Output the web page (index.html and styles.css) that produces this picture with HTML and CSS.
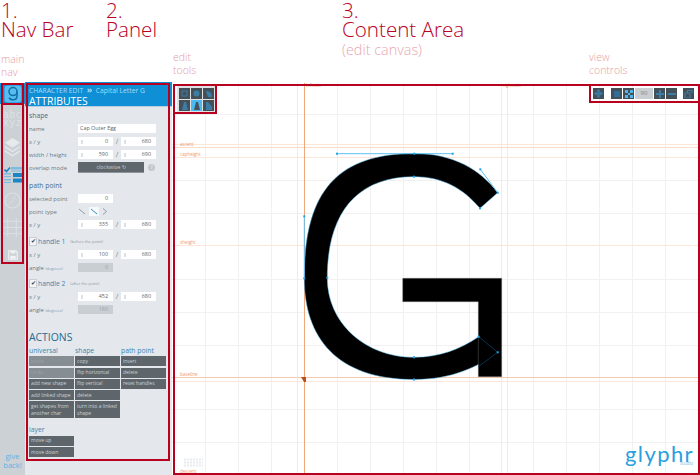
FILE: index.html
```html
<!DOCTYPE html>
<html lang="en">

<head>
    <meta charset="UTF-8" />
    <title>Glyphr Studio - Edit Canvas</title>
    <link rel="stylesheet" href="styles.css">
</head>

<body>
    <div class="titles">
        <div class="title-col">
            <div class="big">1.<br>Nav Bar</div>
            <div class="note note-main">main<br>nav</div>
        </div>
        <div class="big">2.<br>Panel</div>
        <div class="note note-tools">edit<br>tools</div>
        <div class="title-col">
            <div class="big">3.<br>Content Area</div>
            <div class="sub">(edit canvas)</div>
        </div>
        <div class="note note-tools">view<br>controls</div>
    </div>

    <div class="app">
        <div class="nav">
            <div class="nav-logo">
                <svg width="18" height="18" viewBox="0 0 18 18">
                    <rect x="0.5" y="0.5" width="17" height="17" rx="3" fill="#59bdf0" />
                    <circle cx="9" cy="6.6" r="4" fill="none" stroke="#0f6ea6" stroke-width="1.5" />
                    <path d="M13 6.6V11C13 13.4 11.2 14.8 9 14.8C7.2 14.8 5.8 14 5.2 12.6" fill="none" stroke="#0f6ea6" stroke-width="1.5" />
                </svg>
            </div>
            <div class="nav-abc">abc<br>xyz</div>
            <svg class="nav-icon nav-layers" width="15" height="19" viewBox="0 0 18 20" preserveAspectRatio="none">
                <path d="M9 0L18 5L9 10L0 5Z" fill="#e6eaed" />
                <path d="M0 8.500L9 13.500L18 8.500V10L9 15L0 10Z" fill="#e6eaed" />
                <path d="M0 13L9 18L18 13V14.500L9 19.500L0 14.500Z" fill="#e6eaed" />
            </svg>
            <svg class="nav-icon nav-attr" width="18" height="16" viewBox="0 0 18 16">
                <path d="M0.500 2.500L2.500 4.500L6 0.500" fill="none" stroke="#1a86c4" stroke-width="1.600" />
                <rect x="7" y="0" width="11" height="2.500" fill="#7dbbe0" />
                <rect x="7" y="3.500" width="11" height="1" fill="#7dbbe0" />
                <rect x="0" y="6" width="7" height="1.500" fill="#7dbbe0" />
                <rect x="9" y="6" width="9" height="4" fill="#1a86c4" />
                <rect x="0" y="9" width="7" height="1" fill="#7dbbe0" />
                <rect x="0" y="12" width="7" height="1.500" fill="#7dbbe0" />
                <rect x="9" y="11.500" width="9" height="4" fill="#1a86c4" />
                <rect x="0" y="15" width="7" height="1" fill="#7dbbe0" />
            </svg>
            <svg class="nav-icon nav-clock" width="17" height="17" viewBox="0 0 18 18">
                <circle cx="9" cy="9" r="8" fill="none" stroke="#dbe0e3" stroke-width="1.200" />
                <path d="M9.500 9L12 4M9.500 9L6 13" fill="none" stroke="#dbe0e3" stroke-width="0.800" />
            </svg>
            <svg class="nav-icon nav-grid" width="19" height="19" viewBox="0 0 20 18" preserveAspectRatio="none">
                <path d="M0 3H20M0 9H20M0 15H20M5 0V18M14 0V18" fill="none" stroke="#dbe0e3" stroke-width="1" />
            </svg>
            <svg class="nav-icon nav-save" width="10" height="10" viewBox="0 0 13 13">
                <path d="M1 1H10.500L12 2.500V12H1Z" fill="none" stroke="#f0f2f4" stroke-width="1.500" />
                <rect x="3.500" y="1" width="6" height="3.500" fill="#f0f2f4" />
                <rect x="3" y="7.500" width="7" height="4" fill="#f0f2f4" />
            </svg>
            <div class="give-back">give<br>back!</div>
        </div>

        <div class="panel">
            <div class="panel-head">
                <div class="crumb">CHARACTER EDIT &nbsp;<b>&raquo;</b>&nbsp; Capital Letter G</div>
                <div class="panel-title">ATTRIBUTES</div>
            </div>
            <div class="panel-body">
                <h3>shape</h3>
                <div class="row"><span class="lbl">name</span><span class="field field-wide">Cap Outer Egg</span></div>
                <div class="row"><span class="lbl">x / y</span><span class="field num lock">0</span><i>/</i><span class="field num lock">680</span></div>
                <div class="row"><span class="lbl">width / height</span><span class="field num lock">590</span><i>/</i><span class="field num lock">690</span></div>
                <div class="row"><span class="lbl">overlap mode</span><span class="overlap">clockwise &#8635;</span><span class="help">?</span></div>

                <h3 class="sec">path point</h3>
                <div class="row"><span class="lbl">selected point</span><span class="field num">0</span></div>
                <div class="row">
                    <span class="lbl">point type</span>
                    <svg class="ptype" width="36" height="9" viewBox="0 0 36 9">
                        <path d="M1 2L7 7" stroke="#7b8890" stroke-width="0.800" />
                        <rect x="11" y="0" width="10" height="9" fill="#f7f9fb" />
                        <path d="M13 2L19 7" stroke="#2b8fd0" stroke-width="1" />
                        <path d="M25 1.500L28.500 4.500L25 7.500" fill="none" stroke="#7b8890" stroke-width="0.800" />
                    </svg>
                </div>
                <div class="row"><span class="lbl">x / y</span><span class="field num lock">335</span><i>/</i><span class="field num lock">680</span></div>

                <h3 class="sec-handle"><span class="check">&#10004;</span>handle 1 <small>(before the point)</small></h3>
                <div class="row"><span class="lbl">x / y</span><span class="field num lock">100</span><i>/</i><span class="field num lock">680</span></div>
                <div class="row"><span class="lbl">angle <small>(degrees)</small></span><span class="field num off">0</span></div>

                <h3 class="sec-handle gap"><span class="check">&#10004;</span>handle 2 <small>(after the point)</small></h3>
                <div class="row"><span class="lbl">x / y</span><span class="field num lock">452</span><i>/</i><span class="field num lock">680</span></div>
                <div class="row"><span class="lbl">angle <small>(degrees)</small></span><span class="field num off">180</span></div>

                <h2>ACTIONS</h2>
                <div class="actions">
                    <div class="act-col">
                        <h4>universal</h4>
                        <button class="off">paste</button>
                        <button class="off">undo</button>
                        <button>add new shape</button>
                        <button>add linked shape</button>
                        <button class="tall">get shapes from another char</button>
                    </div>
                    <div class="act-col">
                        <h4>shape</h4>
                        <button>copy</button>
                        <button>flip horizontal</button>
                        <button>flip vertical</button>
                        <button>delete</button>
                        <button class="tall">turn into a linked shape</button>
                    </div>
                    <div class="act-col">
                        <h4>path point</h4>
                        <button>insert</button>
                        <button>delete</button>
                        <button>reset handles</button>
                    </div>
                </div>
                <div class="act-col layer">
                    <h4>layer</h4>
                    <button>move up</button>
                    <button>move down</button>
                </div>
            </div>
        </div>

        <div class="canvas">
            <svg class="stage" width="528" height="392" viewBox="172 83 528 392">
                <!-- grid -->
                <path d="M205.500 83V475M238.500 83V475M271.500 83V475M337.500 83V475M370.500 83V475M403.500 83V475M436.500 83V475M469.500 83V475M533.500 83V475M566.500 83V475M599.500 83V475M632.500 83V475M665.500 83V475" stroke="#f1f1f1" stroke-width="1" />
                <path d="M172 114.500H700M172 180.500H700M172 213.500H700M172 279.500H700M172 312.500H700M172 345.500H700M172 409.500H700M172 442.500H700" stroke="#f1f1f1" stroke-width="1" />
                <!-- guides -->
                <path d="M297.500 83V475M501.500 83V475M507.500 83V475M172 144.500H700M172 157.500H700M172 245.500H700M172 381.500H700" stroke="#fde6da" stroke-width="1" />
                <path d="M172 147.500H700" stroke="#fbdccb" stroke-width="1" />
                <path d="M304.500 83V475" stroke="#efa77c" stroke-width="1" />
                <path d="M172 377.500H700" stroke="#f7c9ad" stroke-width="1" />
                <path d="M301 377H306V382L304 382Z" fill="#b9501a" />
                <text class="guide-label" x="306" y="87">leftside</text>
                <text class="guide-label" x="503" y="87">rightside</text>
                <text class="guide-label" x="180" y="146">ascent</text>
                <text class="guide-label" x="180" y="156">capheight</text>
                <text class="guide-label" x="180" y="244">xheight</text>
                <text class="guide-label" x="180" y="376">baseline</text>
                <text class="guide-label" x="180" y="473">descent</text>
                <!-- the G -->
                <path class="egg" d="M497.700 192.700C480.300 169.300 452.700 153.500 414.300 153.500C330 153.500 304.300 200 304.300 278.300C304.300 337 336 379.500 414.300 379.500C452 379.500 478.300 366.700 497.700 352.300L478.700 336.700C460 349 440 357.300 414.300 357.300C364 357.300 327.300 322 327.300 278C327.300 215 355 176.700 414.300 176.700C442 176.700 463 188 480 208.300Z" />
                <path class="bar" d="M402.700 278.300H501.700V376.700H478.300V301.700H402.700Z" />
                <!-- handles -->
                <path d="M337 153.700H452.700M304.300 216.300V278.300M480.300 169.300L497.700 192.700" stroke="#5fc0f2" stroke-width="1" fill="none" />
                <path d="M478.700 336.700L497.700 352.300L478.300 366.700" stroke="#0a3550" stroke-width="1" fill="none" />
                <g fill="#1fa3ea">
                    <rect x="336" y="152.700" width="2" height="2" />
                    <rect x="451.700" y="152.700" width="2" height="2" />
                    <rect x="303.300" y="215.300" width="2" height="2" />
                    <rect x="479.300" y="168.300" width="2" height="2" />
                    <rect x="413.300" y="152.700" width="2" height="2" />
                    <rect x="413" y="175.700" width="2" height="2" />
                    <rect x="496.700" y="191.700" width="2" height="2" />
                    <rect x="479" y="207.300" width="2" height="2" />
                    <rect x="303.300" y="277.300" width="2" height="2" />
                    <rect x="326.300" y="276.700" width="2" height="2" />
                    <rect x="413" y="356.300" width="2" height="2" />
                    <rect x="413" y="378.500" width="2" height="2" />
                    <rect x="477.700" y="335.700" width="2" height="2" />
                    <rect x="496.700" y="351.300" width="2" height="2" />
                </g>
                <!-- keyboard hint -->
                <path d="M184 459.500H203M184 462.500H203M184 465.500H203" stroke="#e8ebee" stroke-width="2" stroke-dasharray="2 1" />
            </svg>

            <div class="edit-tools">
                <span class="tool"><svg width="8" height="8" viewBox="0 0 8 8"><rect x="1" y="1" width="5" height="5" fill="none" stroke="#3a7ea8" /></svg></span>
                <span class="tool"><svg width="8" height="8" viewBox="0 0 8 8"><circle cx="3.500" cy="3.500" r="3" fill="#3a7ea8" /></svg></span>
                <span class="tool"><svg width="8" height="8" viewBox="0 0 8 8"><path d="M1 1C5 1 7 3 7 7L3 7Z" fill="#3a7ea8" /></svg></span>
                <span class="tool"><svg width="8" height="8" viewBox="0 0 8 8"><path d="M3 0H5L7 8H1Z" fill="#3a7ea8" /></svg></span>
                <span class="tool on"><svg width="8" height="8" viewBox="0 0 8 8"><path d="M3 0H5L7 8H1Z" fill="#46525a" /></svg></span>
                <span class="tool"><svg width="8" height="8" viewBox="0 0 8 8"><path d="M1 0H3L7 5V8H1Z" fill="#3a7ea8" /></svg></span>
            </div>

            <div class="view-tools">
                <span class="tool"><svg width="9" height="9" viewBox="0 0 9 9"><path d="M4.500 0L6.500 2.500H5.300V3.700H6.500V2.500L9 4.500L6.500 6.500V5.300H5.300V6.500H6.500L4.500 9L2.500 6.500H3.700V5.300H2.500V6.500L0 4.500L2.500 2.500V3.700H3.700V2.500H2.500Z" fill="#3a7ea8" /></svg></span>
                <span class="tool gap-wide"><svg width="8" height="8" viewBox="0 0 8 8"><path d="M1 1H7V7H1Z" fill="#2f6f99" /></svg></span>
                <span class="tool"><svg width="8" height="8" viewBox="0 0 8 8"><path d="M0 0H3V3H0ZM5 0H8V3H5ZM0 5H3V8H0ZM5 5H8V8H5ZM3 3H5V5H3Z" fill="#52b6ec" /></svg></span>
                <span class="zoom-val">90</span>
                <span class="tool"><svg width="8" height="8" viewBox="0 0 8 8"><path d="M3 0H5V3H8V5H5V8H3V5H0V3H3Z" fill="#3a7ea8" /></svg></span>
                <span class="tool"><svg width="8" height="8" viewBox="0 0 8 8"><rect x="0" y="3" width="8" height="2" fill="#3a7ea8" /></svg></span>
                <span class="tool gap-left"><svg width="9" height="9" viewBox="0 0 9 9"><path d="M1 4H6V9H1ZM3.500 4V1.500H8V4" fill="none" stroke="#3a7ea8" stroke-width="1.200" /></svg></span>
            </div>

            <div class="logo">
                <span class="logo-name">glyphr</span>
                <span class="logo-sub">studio</span>
            </div>
        </div>

        <!-- red callouts drawn over the screen -->
        <div class="mark mark-nav"></div>
        <div class="mark mark-nav-logo"></div>
        <div class="mark mark-panel"></div>
        <div class="mark mark-canvas"></div>
        <div class="mark mark-tools"></div>
        <div class="mark mark-view"></div>
    </div>
</body>

</html>
```

FILE: styles.css
```css
html, body {
    margin: 0;
    padding: 0;
}

body {
    width: 700px;
    height: 475px;
    overflow: hidden;
    background-color: #ffffff;
    font-family: "Open Sans", sans-serif;
}

/* titles above the screenshot */
.titles {
    height: 83px;
    display: grid;
    grid-template-columns: 105px 67px 169px 247px 1fr;
    padding-left: 1px;
    box-sizing: border-box;
}

.big {
    font-size: 20.6px;
    font-weight: 300;
    line-height: 19px;
    padding-top: 1px;
    color: #b8001f;
}

.note {
    font-size: 10.5px;
    font-weight: 300;
    line-height: 13px;
    color: #e69aa6;
}

.note-main {
    margin-top: 14px;
}

.note-tools {
    padding-top: 51px;
}

.sub {
    font-size: 14.4px;
    font-weight: 300;
    color: #e9a6b0;
    line-height: 16px;
    margin-top: 3px;
}

/* app */
.app {
    height: 392px;
    display: flex;
    position: relative;
}

.nav {
    width: 25px;
    background-color: #cbd1d5;
    display: flex;
    flex-direction: column;
    align-items: center;
}

.nav-logo {
    height: 21px;
    width: 25px;
    background-color: #0e8fd6;
    display: flex;
    justify-content: center;
    align-items: center;
}

.nav-logo svg {
    display: block;
}

.nav-abc {
    margin-top: 8px;
    height: 16px;
    font-family: "Liberation Mono", monospace;
    font-size: 10px;
    line-height: 8px;
    letter-spacing: 0.5px;
    color: #dde1e4;
    text-align: center;
}

.nav-icon {
    display: block;
    flex: none;
}

.nav-layers {
    margin-top: 10px;
}

.nav-attr {
    margin-top: 10px;
}

.nav-clock {
    margin-top: 9px;
}

.nav-grid {
    margin-top: 9px;
}

.nav-save {
    margin-top: 13px;
}

.give-back {
    margin-top: auto;
    margin-bottom: 5px;
    font-size: 7.6px;
    line-height: 9px;
    color: #5fb2e4;
    text-align: center;
}

.panel {
    width: 147px;
    margin-top: -1px;
    background-color: #e4e8ed;
}

.panel-head {
    height: 24px;
    background-color: #0e8fd6;
    padding-left: 4px;
    border-bottom: 1px solid #b9cfe0;
}

.crumb {
    font-size: 6.8px;
    line-height: 9px;
    padding-top: 3px;
    color: #a5dcf8;
    white-space: nowrap;
}

.crumb b {
    font-size: 9px;
    line-height: 9px;
}

.panel-title {
    font-size: 10.4px;
    line-height: 12px;
    color: #ffffff;
}

.panel-body {
    padding-left: 4px;
    padding-top: 3px;
}

h3 {
    margin: 0;
    height: 12px;
    font-size: 6.8px;
    font-weight: 400;
    line-height: 12px;
    color: #436f8a;
}

.sec {
    margin-top: 6px;
}

.sec-handle {
    margin-top: 4px;
    height: 13px;
    line-height: 13px;
    display: flex;
    align-items: center;
    color: #3f83ad;
    white-space: pre;
}

.sec-handle.gap {
    margin-top: 3px;
}

.sec-handle small {
    font-size: 4px;
    color: #8a949b;
    margin-left: 3px;
}

.check {
    width: 6px;
    height: 7px;
    margin-right: 1px;
    background-color: #f2f4f6;
    border: 1px solid #c8ced3;
    font-size: 6px;
    line-height: 7px;
    color: #30383d;
    text-align: center;
}

.row {
    height: 13px;
    display: flex;
    align-items: center;
}

.lbl {
    width: 49px;
    flex: none;
    font-size: 5.9px;
    color: #6d7a83;
    white-space: nowrap;
}

.lbl small {
    font-size: 4px;
    color: #8a949b;
}

.field {
    display: block;
    width: 35px;
    height: 9px;
    box-sizing: border-box;
    background-color: #ffffff;
    font-size: 5.4px;
    line-height: 9px;
    color: #5a656c;
    padding: 0 5px 0 2px;
}

.field-wide {
    width: 78px;
}

.num {
    text-align: right;
}

.lock {
    background: linear-gradient(#dde1e5, #dde1e5) 3px 3px / 2px 4px no-repeat #ffffff;
}

.field.off {
    background-color: #c9ced3;
    color: #9aa3a9;
}

.row i {
    width: 8px;
    font-style: normal;
    text-align: center;
    font-size: 7px;
    color: #7a858c;
}

.overlap {
    width: 66px;
    height: 10px;
    background-color: #60676c;
    border-bottom: 1px solid #8d959a;
    font-size: 5.4px;
    line-height: 10px;
    color: #c7ccd0;
    text-align: center;
}

.help {
    width: 7px;
    height: 7px;
    margin-left: 4px;
    border-radius: 50%;
    background-color: #c2c8cd;
    color: #eef0f2;
    font-size: 5px;
    line-height: 7px;
    text-align: center;
}

.ptype {
    display: block;
}

h2 {
    margin: 13px 0 0 0;
    height: 17px;
    font-size: 10.4px;
    font-weight: 400;
    line-height: 17px;
    color: #27688f;
}

h4 {
    margin: 0;
    height: 9px;
    font-size: 6.8px;
    font-weight: 400;
    line-height: 9px;
    color: #3f83ad;
}

.actions {
    display: flex;
    gap: 1px;
}

.act-col {
    width: 45px;
    display: flex;
    flex-direction: column;
    gap: 1.3px;
}

button {
    display: block;
    width: 45px;
    height: 10px;
    margin: 0;
    padding: 0 2px;
    border: 0;
    background-color: #5e666b;
    font-family: "Open Sans", sans-serif;
    font-size: 5px;
    line-height: 7px;
    color: #ccd1d5;
    text-align: left;
    white-space: nowrap;
}

button.off {
    background-color: #878e93;
    color: #9ba2a7;
}

button.tall {
    height: 17px;
    white-space: normal;
}

.layer {
    margin-top: 7px;
}

/* canvas */
.canvas {
    flex: 1;
    position: relative;
    background-color: #ffffff;
}

.stage {
    display: block;
}

.egg {
    fill: #000000;
    stroke: #58bdf0;
    stroke-width: 0.5;
}

.bar {
    fill: #000000;
    stroke: #777777;
    stroke-width: 0.4;
}

.guide-label {
    font-family: "Open Sans", sans-serif;
    font-size: 4.5px;
    fill: #ee9a68;
}

.edit-tools {
    position: absolute;
    left: 5px;
    top: 3px;
    padding: 2px;
    display: grid;
    grid-template-columns: repeat(3, 11px);
    grid-auto-rows: 11px;
    gap: 1px;
    background-color: #dfe3e6;
}

.view-tools {
    position: absolute;
    right: 6px;
    top: 5px;
    display: flex;
    gap: 1px;
}

.tool {
    width: 11px;
    height: 11px;
    background-color: #444f57;
    display: flex;
    justify-content: center;
    align-items: center;
}

.tool svg {
    display: block;
}

.tool.on {
    background-color: #4bb8f2;
}

.gap-left {
    margin-left: 5px;
}

.gap-wide {
    margin-left: 6px;
}

.zoom-val {
    width: 18px;
    height: 11px;
    background-color: #c9ced3;
    font-size: 6px;
    line-height: 11px;
    color: #7c858b;
    text-align: center;
}

.logo {
    position: absolute;
    right: 7px;
    bottom: 9px;
    width: 68px;
    display: flex;
    flex-direction: column;
    align-items: flex-end;
    color: #2a9fe0;
}

.logo-name {
    display: block;
    width: 68px;
    font-family: "Lato", sans-serif;
    font-weight: 400;
    font-size: 22px;
    line-height: 15px;
    letter-spacing: 1.4px;
    white-space: nowrap;
}

.logo-sub {
    font-size: 4.5px;
    line-height: 5px;
    color: #6dbde8;
}

/* callouts */
.mark {
    position: absolute;
    box-sizing: border-box;
    border: 2px solid #b8001f;
}

.mark-nav {
    left: 1px;
    top: 0;
    width: 23px;
    height: 181px;
}

.mark-nav-logo {
    left: 1px;
    top: 0;
    width: 23px;
    height: 22px;
}

.mark-panel {
    left: 26px;
    top: 0;
    width: 144px;
    height: 378px;
}

.mark-canvas {
    left: 173px;
    top: 1px;
    width: 527px;
    height: 391px;
}

.mark-tools {
    left: 173px;
    top: 1px;
    width: 44px;
    height: 30px;
}

.mark-view {
    left: 589px;
    top: 1px;
    width: 111px;
    height: 19px;
}
```
